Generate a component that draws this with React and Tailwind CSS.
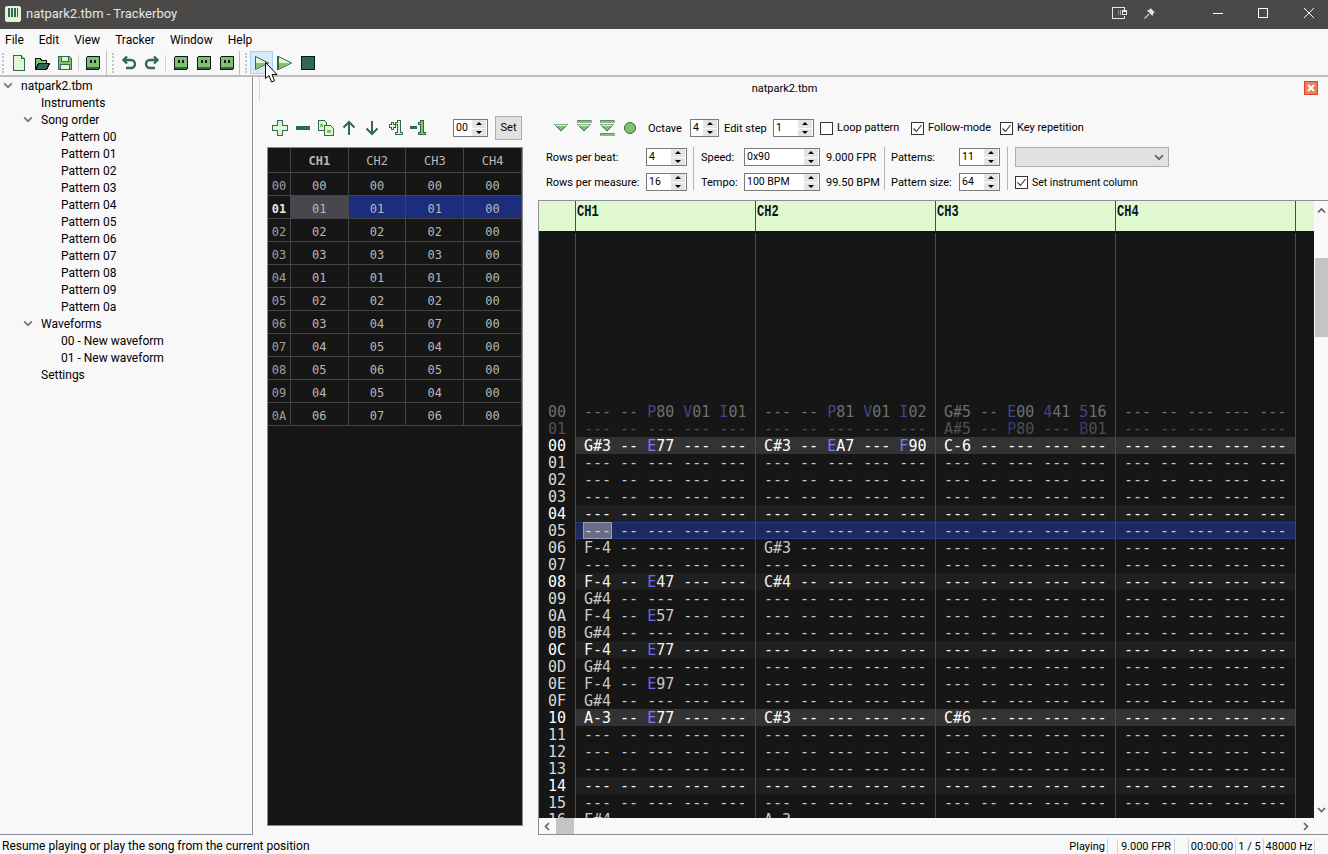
import React from 'react';

const LIGHT = '#e0f8cf';
const MID = '#86c06c';
const DARK = '#306850';
const INK = '#071821';

const Svg = ({ children, size = 16 }) => (
  <svg width={size} height={size} viewBox="0 0 16 16" shapeRendering="crispEdges">{children}</svg>
);

const NewIcon = () => (
  <Svg>
    <path d="M2.5 .5h8l3 3v12h-11z" fill={LIGHT} stroke={DARK} />
    <path d="M10.5 .5v3h3" fill={MID} stroke={DARK} />
  </Svg>
);
const OpenIcon = () => (
  <Svg>
    <path d="M1.5 14.5v-11h5l1 2h5v3" fill={MID} stroke={INK} />
    <path d="M1.5 14.5l3-6h11l-3 6z" fill={DARK} stroke={INK} />
  </Svg>
);
const SaveIcon = () => (
  <Svg>
    <path d="M1.5 1.5h11l2 2v11h-13z" fill={MID} stroke={DARK} />
    <rect x="4.5" y="1.5" width="7" height="5" fill={LIGHT} stroke={DARK} />
    <rect x="3.5" y="9.5" width="9" height="5" fill={LIGHT} stroke={DARK} />
  </Svg>
);
const FaceIcon = () => (
  <Svg>
    <rect x="1.5" y="1.5" width="13" height="13" rx="1.5" fill={MID} stroke={INK} />
    <rect x="2" y="12" width="12" height="2" fill={DARK} />
    <rect x="5" y="5" width="2" height="3" fill={INK} />
    <rect x="9" y="5" width="2" height="3" fill={INK} />
  </Svg>
);
const UndoIcon = ({ flip }) => (
  <Svg>
    <g transform={flip ? 'translate(16 0) scale(-1 1)' : undefined} fill="none" stroke={DARK} strokeWidth="2.4">
      <path d="M4 5h6a3.5 3.5 0 0 1 0 8H5" shapeRendering="auto" />
      <path d="M6 1.5L2.5 5L6 8.5" shapeRendering="auto" />
    </g>
  </Svg>
);
const PlayIcon = ({ start }) => (
  <Svg>
    <path d="M1.5 1.5L14.5 8L1.5 14.5z" fill={LIGHT} stroke={DARK} shapeRendering="auto" />
    <path d="M2 8h11L2 14z" fill={MID} shapeRendering="auto" />
    {start && <rect x="0" y="1" width="2" height="14" fill={DARK} />}
  </Svg>
);
const StopIcon = () => (
  <Svg>
    <rect x="1.5" y="1.5" width="13" height="13" fill={DARK} stroke={INK} />
  </Svg>
);
const PlusIcon = () => (
  <Svg>
    <path d="M5.5 .5h5v5h5v5h-5v5h-5v-5h-5v-5h5z" fill={LIGHT} stroke={DARK} />
  </Svg>
);
const MinusIcon = () => (
  <Svg>
    <rect x="1" y="6" width="14" height="4" fill={DARK} />
  </Svg>
);
const DupIcon = () => (
  <Svg>
    <path d="M.5 .5h6l2 2v8h-8z" fill={LIGHT} stroke={DARK} />
    <path d="M6.5 5.5h6l3 3v7h-9z" fill={LIGHT} stroke={DARK} />
    <rect x="9" y="10" width="4" height="3" fill={MID} />
    <rect x="2" y="4" width="3" height="3" fill={MID} />
  </Svg>
);
const ArrowIcon = ({ down }) => (
  <Svg>
    <g transform={down ? 'rotate(180 8 8)' : undefined} fill="none" stroke={DARK} strokeWidth="2">
      <path d="M8 15V2M2.5 7.5L8 2l5.5 5.5" shapeRendering="auto" />
    </g>
  </Svg>
);
const IncIcon = ({ minus }) => (
  <Svg>
    {minus
      ? <rect x="0" y="6" width="7" height="3" fill={DARK} />
      : <path d="M2.5 4.5h2v-2h2v2h2v3h-2v2h-2v-2h-2z" fill={LIGHT} stroke={DARK} />}
    <path d="M10.5 .5h3v12h2v2h-7v-2h2v-8h-2v-2h2z" fill={minus ? MID : LIGHT} stroke={DARK} />
  </Svg>
);
const RowIcon = ({ top, bottom }) => (
  <Svg>
    {top && <rect x="1" y="0" width="14" height="2" fill={MID} stroke={DARK} strokeWidth=".5" />}
    <path d="M1.5 4.5h13L8 11z" fill={MID} stroke={DARK} shapeRendering="auto" />
    <path d="M1.5 4.5h13l-1.5 1.5h-10z" fill={LIGHT} shapeRendering="auto" />
    {bottom && <rect x="1" y="13" width="14" height="2" fill={MID} stroke={DARK} strokeWidth=".5" />}
  </Svg>
);
const RecordIcon = () => (
  <Svg>
    <circle cx="8" cy="8" r="5.5" fill={MID} stroke={DARK} shapeRendering="auto" />
  </Svg>
);

const Grip = () => <div className="w-[3px] h-[20px] mx-[2px] border-l-2 border-dotted border-[#c4c4c4]" />;
const Sep = ({ className }) => <div className={`w-px h-[16px] bg-[#d0d0d0] ${className}`} />;
const BigSep = ({ className }) => <div className={`w-px h-[24px] bg-[#bdbdbd] ${className}`} />;

const ToolBtn = ({ children, hover }) => (
  <div className={`w-[23px] h-[23px] shrink-0 flex items-center justify-center border ${hover ? 'bg-[#d8e9f8] border-[#a6d3f5]' : 'border-transparent'}`}>
    {children}
  </div>
);

const Spin = ({ value, w }) => (
  <div className={`h-[18px] border border-[#7a7a7a] bg-white flex items-center justify-between ${w}`}>
    <span className="pl-[2px] pt-px text-[10.5px] leading-none">{value}</span>
    <div className="w-[14px] mr-px h-[16px] flex flex-col gap-px">
      <div className="flex-1 bg-[#e4e4e4] flex items-center justify-center">
        <div className="w-0 h-0 border-x-[3px] border-x-transparent border-b-[3px] border-b-black" />
      </div>
      <div className="flex-1 bg-[#e4e4e4] flex items-center justify-center">
        <div className="w-0 h-0 border-x-[3px] border-x-transparent border-t-[3px] border-t-black" />
      </div>
    </div>
  </div>
);

const Check = ({ checked, label, className = '' }) => (
  <div className={`flex items-center gap-[4px] ${className}`}>
    <div className="w-[13px] h-[13px] border border-[#333] bg-white flex items-center justify-center">
      {checked && (
        <svg width="11" height="11" viewBox="0 0 11 11">
          <path d="M1.5 5.5L4.5 8.5L9.5 2" fill="none" stroke="#333" strokeWidth="1.1" />
        </svg>
      )}
    </div>
    <span>{label}</span>
  </div>
);

const Chevron = ({ dir, color = '#555', size = 9 }) => {
  const d = {
    down: 'M1 3L4.5 6.5L8 3',
    up: 'M1 6.5L4.5 3L8 6.5',
    left: 'M6 1L2.5 4.5L6 8',
    right: 'M3 1L6.5 4.5L3 8'
  }[dir];
  return (
    <svg width={size} height={size} viewBox="0 0 9 9">
      <path d={d} fill="none" stroke={color} strokeWidth="1.6" />
    </svg>
  );
};

const TreeRow = ({ indent, arrow, children }) => (
  <div className="h-[17px] flex items-center relative text-[#000]" style={{ paddingLeft: indent }}>
    {arrow && <span className="absolute" style={{ left: indent - 18, top: 3 }}><Chevron dir="down" color="#7a7a7a" size={10} /></span>}
    {children}
  </div>
);

const Tree = () => (
  <div className="w-[253px] shrink-0 border-r border-b border-[#8a8f99]">
    <TreeRow indent={21} arrow>natpark2.tbm</TreeRow>
    <TreeRow indent={41}>Instruments</TreeRow>
    <TreeRow indent={41} arrow>Song order</TreeRow>
    {['00', '01', '02', '03', '04', '05', '06', '07', '08', '09', '0a'].map((n) => (
      <TreeRow key={n} indent={61}>Pattern {n}</TreeRow>
    ))}
    <TreeRow indent={41} arrow>Waveforms</TreeRow>
    <TreeRow indent={61}>00 - New waveform</TreeRow>
    <TreeRow indent={61}>01 - New waveform</TreeRow>
    <TreeRow indent={41}>Settings</TreeRow>
  </div>
);

const ORDERS = [
  ['00', '00', '00', '00', '00'],
  ['01', '01', '01', '01', '00'],
  ['02', '02', '02', '02', '00'],
  ['03', '03', '03', '03', '00'],
  ['04', '01', '01', '01', '00'],
  ['05', '02', '02', '02', '00'],
  ['06', '03', '04', '07', '00'],
  ['07', '04', '05', '04', '00'],
  ['08', '05', '06', '05', '00'],
  ['09', '04', '05', '04', '00'],
  ['0A', '06', '07', '06', '00']
];

const OrderTable = () => (
  <div className="w-[256px] h-[679px] mt-[7px] bg-[#161616] border border-[#8a8a8a] font-['DejaVu_Sans_Mono',monospace] text-[12px] text-[#b8b8b8]">
    <div className="flex h-[25px] border-b border-[#454545]">
      <div className="w-[23px] border-r border-[#454545]" />
      {['CH1', 'CH2', 'CH3', 'CH4'].map((c, i) => (
        <div key={c} className={`w-[58px] border-r border-[#454545] pt-[2px] flex items-center justify-center ${i === 0 ? 'font-bold' : ''}`}>{c}</div>
      ))}
    </div>
    {ORDERS.map((r, i) => (
      <div key={r[0]} className="flex h-[23px] border-b border-[#454545]">
        <div className={`w-[23px] border-r border-[#454545] pt-[3px] flex items-center justify-center ${i === 1 ? 'font-bold text-[#e8e8e8]' : 'text-[#a0a0a0]'}`}>{r[0]}</div>
        {r.slice(1).map((v, j) => (
          <div
            key={j}
            className={`w-[58px] border-r border-[#454545] pt-[3px] flex items-center justify-center ${i === 1 ? (j === 0 ? 'bg-[#47474d]' : 'bg-[#1d2d7d]') : ''}`}
          >
            {v}
          </div>
        ))}
      </div>
    ))}
  </div>
);

// one channel: note, inst, fx1, fx2, fx3
const BLANK = ['---', '--', '---', '---', '---'];
const GHOST = [
  { n: '00', cells: [['---', '--', 'P80', 'V01', 'I01'], ['---', '--', 'P81', 'V01', 'I02'], ['G#5', '--', 'E00', '441', '516'], BLANK] },
  { n: '01', cells: [BLANK, BLANK, ['A#5', '--', 'P80', '---', 'B01'], BLANK] }
];
const NOTES = {
  0: [['G#3', '--', 'E77', '---', '---'], ['C#3', '--', 'EA7', '---', 'F90'], ['C-6', '--', '---', '---', '---'], BLANK],
  6: [['F-4', '--', '---', '---', '---'], ['G#3', '--', '---', '---', '---'], BLANK, BLANK],
  8: [['F-4', '--', 'E47', '---', '---'], ['C#4', '--', '---', '---', '---'], BLANK, BLANK],
  9: [['G#4', '--', '---', '---', '---'], BLANK, BLANK, BLANK],
  10: [['F-4', '--', 'E57', '---', '---'], BLANK, BLANK, BLANK],
  11: [['G#4', '--', '---', '---', '---'], BLANK, BLANK, BLANK],
  12: [['F-4', '--', 'E77', '---', '---'], BLANK, BLANK, BLANK],
  13: [['G#4', '--', '---', '---', '---'], BLANK, BLANK, BLANK],
  14: [['F-4', '--', 'E97', '---', '---'], BLANK, BLANK, BLANK],
  15: [['G#4', '--', '---', '---', '---'], BLANK, BLANK, BLANK],
  16: [['A-3', '--', 'E77', '---', '---'], ['C#3', '--', '---', '---', '---'], ['C#6', '--', '---', '---', '---'], BLANK],
  22: [['F#4', '--', '---', '---', '---'], ['A-3', '--', '---', '---', '---'], BLANK, BLANK]
};

const hex = (i) => i.toString(16).toUpperCase().padStart(2, '0');

const Cell = ({ text, fx, textColor, fxColor, cursor }) => {
  const isFx = fx && text !== '---';
  return (
    <span
      className={cursor
        ? 'w-[29px] -mx-px h-[17px] leading-[17px] bg-[#686c84] border border-[#9a9eb0] text-left whitespace-nowrap'
        : 'h-[17px] leading-[19px] whitespace-nowrap'}
      style={{ color: cursor ? '#d0d0d0' : textColor }}
    >
      {isFx ? (
        <>
          <span style={{ color: fxColor }}>{text[0]}</span>
          {text.slice(1)}
        </>
      ) : text}
    </span>
  );
};

const PatternRow = ({ num, cells, bg, numColor, textColor, fxColor, current }) => (
  <div className="flex h-[17px] leading-[19px]">
    <div className="w-[36px] shrink-0 pr-[9px] text-right" style={{ color: numColor }}>{num}</div>
    {cells.map((ch, c) => (
      <div
        key={c}
        className={`w-[180px] shrink-0 border-l border-[#4a4a4a] pl-[8px] flex gap-[9px] items-center ${current ? 'border-y border-y-[#26378a]' : ''}`}
        style={{ background: bg }}
      >
        {ch.map((t, k) => (
          <Cell key={k} text={t} fx={k >= 2} textColor={textColor} fxColor={fxColor} cursor={current && c === 0 && k === 0} />
        ))}
      </div>
    ))}
    <div className="flex-1 border-l border-[#4a4a4a]" />
  </div>
);

const PatternEditor = () => {
  const rows = [];
  for (let i = 0; i < 23; i++) {
    let bg = '#161616';
    let textColor = '#c8c8c8';
    let numColor = '#d8d8d8';
    let fxColor = '#6a6ae0';
    if (i % 4 === 0) {
      bg = '#1f1f1f';
      textColor = '#f0f0f0';
      numColor = '#ffffff';
    }
    if (i % 16 === 0) {
      bg = '#333333';
      textColor = '#ffffff';
      fxColor = '#7a7aff';
    }
    if (i === 5) bg = '#1c2a5e';
    rows.push(
      <PatternRow
        key={i}
        num={hex(i)}
        cells={NOTES[i] || [BLANK, BLANK, BLANK, BLANK]}
        bg={bg}
        numColor={numColor}
        textColor={textColor}
        fxColor={fxColor}
        current={i === 5}
      />
    );
  }

  return (
    <div className="h-[635px] border-y border-l border-[#8a8f99] bg-[#f8f8f8] flex flex-col">
      <div className="flex flex-1 min-h-0">
        <div className="w-[775px] shrink-0 flex flex-col font-['DejaVu_Sans_Mono',monospace] text-[15px]">
          <div className="flex h-[32px] shrink-0 bg-[#e0f8cf] border-b-2 border-[#071821] font-['Liberation_Mono',monospace] font-bold text-[12px] text-[#071821]">
            <div className="w-[36px] shrink-0" />
            {['CH1', 'CH2', 'CH3', 'CH4'].map((c) => (
              <div key={c} className="w-[180px] shrink-0 border-l border-[#4a4a4a] pl-[1px] pt-[3px] leading-[12px]">
                <span className="inline-block origin-top scale-y-[1.35]">{c}</span>
              </div>
            ))}
            <div className="flex-1 border-l border-[#4a4a4a]" />
          </div>
          <div className="flex-1 min-h-0 overflow-hidden bg-[#161616]">
            <div className="flex h-[170px]">
              <div className="w-[36px] shrink-0" />
              {[0, 1, 2, 3].map((k) => (
                <div key={k} className="w-[180px] shrink-0 border-l border-[#4a4a4a]" />
              ))}
              <div className="flex-1 border-l border-[#4a4a4a]" />
            </div>
            {GHOST.map((g, i) => (
              <PatternRow key={g.n} num={g.n} cells={g.cells} bg="#161616" numColor={i === 0 ? '#6e6e6e' : '#505050'} textColor={i === 0 ? '#6e6e6e' : '#505050'} fxColor={i === 0 ? '#45458c' : '#383870'} />
            ))}
            {rows}
          </div>
        </div>
        <div className="flex-1 flex flex-col items-center pt-[5px] pb-[4px]">
          <Chevron dir="up" color="#606060" />
          <div className="w-[13px] ml-px h-[79px] mt-[43px] bg-[#c4c4c4]" />
          <div className="flex-1" />
          <Chevron dir="down" color="#606060" />
        </div>
      </div>
      <div className="h-[16px] shrink-0 flex items-center pl-[4px] pr-[18px]">
        <Chevron dir="left" color="#606060" />
        <div className="w-[18px] h-full ml-[4px] bg-[#c4c4c4]" />
        <div className="flex-1" />
        <Chevron dir="right" color="#606060" />
      </div>
    </div>
  );
};

const Cursor = () => (
  <svg className="absolute left-[265px] top-[62px]" width="14" height="22" viewBox="0 0 14 22">
    <path d="M.5 .5V16.5L4 13.5L6.5 20L9.5 18.8L7 12.5H12z" fill="#fff" stroke="#000" />
  </svg>
);

export default function App() {
  return (
    <div className="relative w-[1328px] h-[854px] overflow-hidden bg-[#f8f8f8] text-[12px] text-black font-['Roboto',sans-serif] flex flex-col">
      {/* title bar */}
      <div className="h-[29px] shrink-0 bg-[#4a4947] flex items-center text-[#e6e6e6] pb-px">
        <svg className="ml-[5px]" width="16" height="16" viewBox="0 0 16 16" shapeRendering="crispEdges">
          <rect x=".5" y=".5" width="15" height="15" rx="2" fill="#e0f8cf" stroke="#e8e8e8" />
          <path d="M3 2h2v9H3zM6 2h2v9H6zM9 2h2v9H9zM12 2h1v9h-1z" fill="#306850" />
        </svg>
        <span className="ml-[5px] text-[13px]">natpark2.tbm - Trackerboy</span>
        <div className="flex-1" />
        <div className="flex items-center mb-[2px]">
          <svg width="15" height="12" viewBox="0 0 15 12" className="mr-[17px]" shapeRendering="crispEdges">
            <path d="M12.5 3V.5H.5v10.5h12V9" fill="none" stroke="#e6e6e6" />
            <rect x="6" y="3" width="1" height="5" fill="#888" />
            <rect x="8" y="3" width="1" height="5" fill="#aaa" />
            <rect x="10" y="3" width="5" height="5" fill="#e6e6e6" />
            <rect x="11" y="5" width="3" height="2" fill="#4a4947" />
          </svg>
          <svg width="11" height="11" viewBox="0 0 11 11" className="mr-[58px]">
            <path d="M6.5 0L11 4.5L9.5 5L8.5 8L3 2.5L6 1.5z" fill="#e4e4ec" />
            <path d="M5 6L.5 10.5" stroke="#c8c8d0" strokeWidth="1.2" />
          </svg>
          <div className="w-[10px] h-px bg-white mr-[35px]" />
          <div className="w-[10px] h-[10px] border border-white mr-[36px]" />
          <svg width="10" height="10" viewBox="0 0 10 10" className="mr-[14px]">
            <path d="M0 0L10 10M10 0L0 10" stroke="#fff" strokeWidth="1" />
          </svg>
        </div>
      </div>

      {/* menu */}
      <div className="h-[21px] shrink-0 flex items-center pl-[5px] gap-[15px] text-[12px]">
        {['File', 'Edit', 'View', 'Tracker', 'Window', 'Help'].map((m) => <span key={m}>{m}</span>)}
      </div>

      {/* toolbar */}
      <div className="h-[27px] shrink-0 flex items-center border-b-2 border-[#bdbdbd]">
        <Grip />
        <ToolBtn><NewIcon /></ToolBtn>
        <ToolBtn><OpenIcon /></ToolBtn>
        <ToolBtn><SaveIcon /></ToolBtn>
        <Sep className="ml-[2px] mr-[2px]" />
        <ToolBtn><FaceIcon /></ToolBtn>
        <BigSep className="ml-[2px] mr-[3px]" />
        <Grip />
        <ToolBtn><UndoIcon /></ToolBtn>
        <ToolBtn><UndoIcon flip /></ToolBtn>
        <Sep className="ml-[2px] mr-[3px]" />
        <ToolBtn><FaceIcon /></ToolBtn>
        <ToolBtn><FaceIcon /></ToolBtn>
        <ToolBtn><FaceIcon /></ToolBtn>
        <BigSep className="ml-[1px] mr-[3px]" />
        <Grip />
        <ToolBtn hover><PlayIcon /></ToolBtn>
        <ToolBtn><PlayIcon start /></ToolBtn>
        <ToolBtn><StopIcon /></ToolBtn>
      </div>

      {/* main */}
      <div className="flex-1 min-h-0 flex">
        <Tree />
        <div className="flex-1 min-w-0 flex flex-col">
          <div className="h-[24px] shrink-0 flex items-center justify-center relative pr-[12px] pt-[1px]">
            <div className="absolute left-[6px] top-0 h-[24px] w-px bg-[#d4d4d4]" />
            <span className="text-[11px]">natpark2.tbm</span>
            <div className="absolute right-[10px] top-[4px] w-[14px] h-[14px] bg-[#e8835c] border border-[#d8432e] flex items-center justify-center">
              <svg width="8" height="8" viewBox="0 0 8 8"><path d="M1 1L7 7M7 1L1 7" stroke="#fff" strokeWidth="2" /></svg>
            </div>
          </div>
          <div className="flex-1 min-h-0 flex pl-[14px] text-[11px]">
            {/* order column */}
            <div className="w-[273px] shrink-0 flex flex-col pt-[15px]">
              <div className="h-[24px] flex items-center w-[256px] pl-px">
                <div className="flex">
                  <ToolBtn><PlusIcon /></ToolBtn>
                  <ToolBtn><MinusIcon /></ToolBtn>
                  <ToolBtn><DupIcon /></ToolBtn>
                  <ToolBtn><ArrowIcon /></ToolBtn>
                  <ToolBtn><ArrowIcon down /></ToolBtn>
                  <ToolBtn><IncIcon /></ToolBtn>
                  <ToolBtn><IncIcon minus /></ToolBtn>
                </div>
                <div className="ml-[24px]"><Spin value="00" w="w-[35px]" /></div>
                <div className="ml-[7px] w-[27px] h-[24px] bg-[#e1e1e1] border border-[#adadad] flex items-center justify-center">Set</div>
              </div>
              <OrderTable />
            </div>
            {/* pattern column */}
            <div className="flex-1 min-w-0 flex flex-col">
              <div className="h-[24px] mt-[15px] ml-[9px] flex items-center">
                <ToolBtn><RowIcon /></ToolBtn>
                <ToolBtn><RowIcon top /></ToolBtn>
                <ToolBtn><RowIcon top bottom /></ToolBtn>
                <ToolBtn><RecordIcon /></ToolBtn>
                <span className="ml-[7px] w-[42px] pt-[2px]">Octave</span>
                <Spin value="4" w="w-[29px]" />
                <span className="ml-[5px] w-[49px] pt-[2px]">Edit step</span>
                <Spin value="1" w="w-[41px]" />
                <Check label="Loop pattern" className="ml-[6px] w-[91px]" />
                <Check checked label="Follow-mode" className="w-[89px]" />
                <Check checked label="Key repetition" />
              </div>
              <div className="flex mt-[7px] ml-[6px] h-[46px]">
                <div className="grid grid-cols-[100px_41px] grid-rows-[18px_18px] gap-y-[7px] pt-px items-center">
                  <span className="pt-[3px]">Rows per beat:</span><Spin value="4" w="w-[41px]" />
                  <span className="pt-[3px]">Rows per measure:</span><Spin value="16" w="w-[41px]" />
                </div>
                <div className="w-px h-[43px] bg-[#b4b4b4] mx-[6px]" />
                <div className="grid grid-cols-[43px_76px_64px] grid-rows-[18px_18px] gap-y-[7px] pt-px items-center pl-[1px]">
                  <span className="pt-[3px]">Speed:</span><Spin value="0x90" w="w-[76px]" /><span className="pl-[6px] pt-[3px]">9.000 FPR</span>
                  <span className="pt-[3px]">Tempo:</span><Spin value="100 BPM" w="w-[76px]" /><span className="pl-[6px] pt-[3px]">99.50 BPM</span>
                </div>
                <div className="w-px h-[43px] bg-[#b4b4b4] mr-[6px]" />
                <div className="grid grid-cols-[68px_41px] grid-rows-[18px_18px] gap-y-[7px] pt-px items-center">
                  <span className="pt-[3px]">Patterns:</span><Spin value="11" w="w-[41px]" />
                  <span className="pt-[3px]">Pattern size:</span><Spin value="64" w="w-[41px]" />
                </div>
                <div className="w-px h-[43px] bg-[#b4b4b4] mx-[7px]" />
                <div className="flex flex-col w-[154px]">
                  <div className="h-[20px] bg-[#e2e2e2] border border-[#adadad] flex items-center justify-end pr-[4px]">
                    <Chevron dir="down" color="#666" size={10} />
                  </div>
                  <Check checked label="Set instrument column" className="mt-[8px] text-[10.5px]" />
                </div>
              </div>
              <div className="mt-[7px] -ml-[2px]">
                <PatternEditor />
              </div>
            </div>
          </div>
        </div>
      </div>

      {/* status */}
      <div className="h-[19px] shrink-0 flex items-center pl-[2px] pt-[3px]">
        <span>Resume playing or play the song from the current position</span>
        <div className="flex-1" />
        <div className="flex items-center text-[11px] leading-[15px]">
          <span className="pr-[2px] pt-px">Playing</span>
          <div className="w-px h-[15px] bg-[#d0d0d0]" />
          <div className="w-[9px]" />
          <div className="w-px h-[15px] bg-[#d0d0d0]" />
          <span className="w-[56px] text-center pt-px">9.000 FPR</span>
          <div className="w-px h-[15px] bg-[#d0d0d0]" />
          <div className="w-[13px]" />
          <div className="w-px h-[15px] bg-[#d0d0d0]" />
          <span className="w-[46px] text-center pt-px">00:00:00</span>
          <div className="w-px h-[15px] bg-[#d0d0d0]" />
          <span className="w-[27px] text-center pt-px">1 / 5</span>
          <div className="w-px h-[15px] bg-[#d0d0d0]" />
          <span className="w-[50px] text-center pt-px">48000 Hz</span>
          <div className="w-px h-[15px] bg-[#d0d0d0] mr-[13px]" />
        </div>
      </div>

      <Cursor />
    </div>
  );
}
